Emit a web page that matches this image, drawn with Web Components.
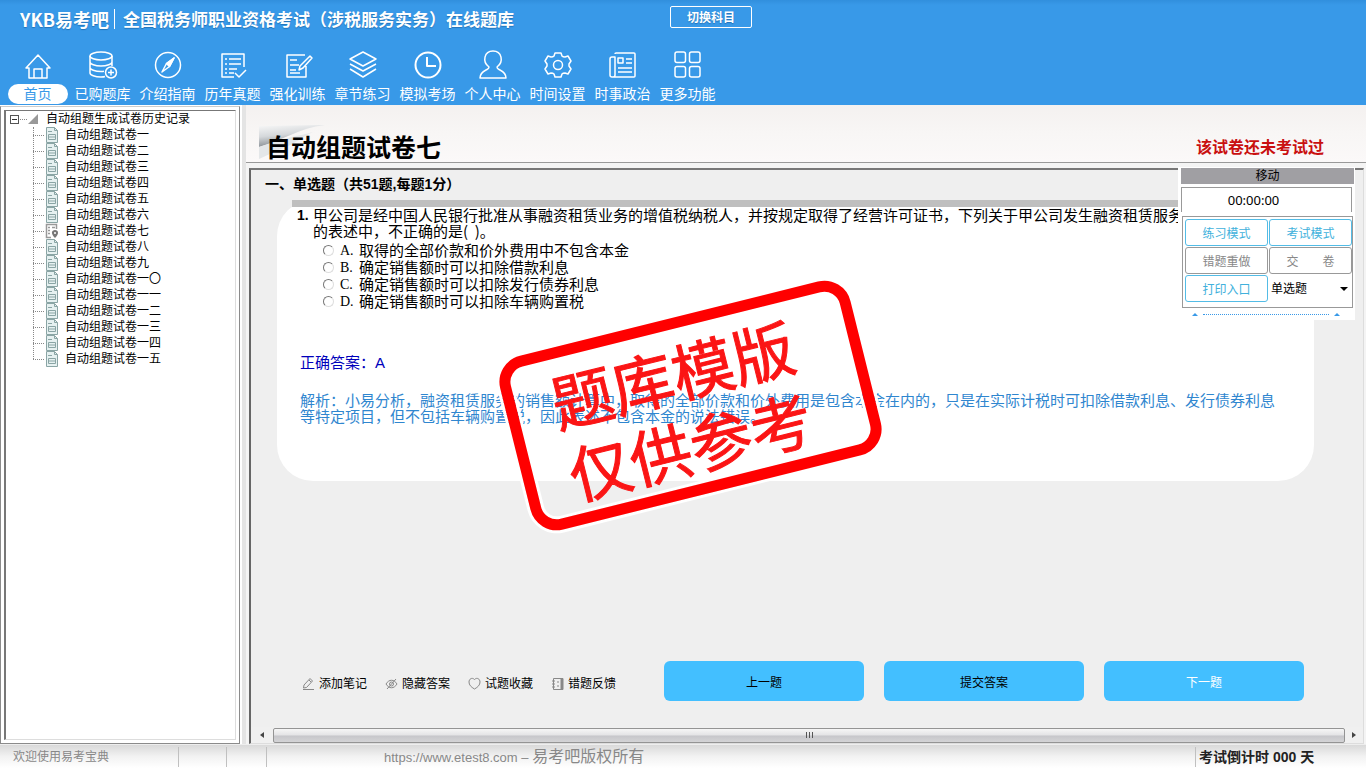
<!DOCTYPE html>
<html lang="zh-CN">
<head>
<meta charset="utf-8">
<meta name="viewport" content="width=device-width, initial-scale=1">
<title>易考吧在线题库</title>
<style>
  html, body { margin: 0; height: 100%; }
  body { font-family: "Liberation Sans", "Noto Sans CJK SC", sans-serif; font-size: 12px; color: #000; background: #f0f0f0; overflow-x: hidden; }
</style>
</head>
<body>
<exam-app></exam-app>

<script>
const define = (name, html, ready) => {
  const tpl = document.createElement('template');
  tpl.innerHTML = html;
  customElements.define(name, class extends HTMLElement {
    constructor() {
      super();
      this.attachShadow({ mode: 'open' }).append(tpl.content.cloneNode(true));
    }
    connectedCallback() { if (ready) ready(this, this.shadowRoot); }
  });
};

const NAV_ICONS = {
  home: '<path d="M2 17 14 4l12 13h-3v10H5V17zM10 27V18h8v9"/>',
  bank: '<ellipse cx="12" cy="5" rx="11" ry="4"/><path d="M1 5v17c0 2 5 4 11 4 2 0 3 0 4-.5M23 5v10M1 11c0 2 5 4 11 4s11-2 11-4M1 16.500c0 2 5 4 11 4 1 0 2 0 3-.2"/><circle cx="22" cy="21.500" r="5.500"/><path d="M22 18.500v6M19 21.500h6"/>',
  compass: '<circle cx="14" cy="14" r="12.500"/><path d="m20 7-4.500 8.500L8 21l4.500-8.500z"/><path d="m20 7-7.500 5.500 3 3z" fill="currentColor"/>',
  list: '<path d="M25 16V3H3v23h12M6 8h2M10 8h12M6 13h2M10 13h12M6 18h2M10 18h8M6 22h2M10 22h5M16 22l4 4 7-7"/>',
  edit: '<path d="M21 4H3v22h19V15M6 9h7M6 14h9M6 19h6M6 22h10M26 5l2 2-9 10-4 2 1-4z"/>',
  layers: '<path d="m14 1 13 7-13 7L1 8zM1 13l13 7 13-7M1 18l13 8 13-8"/>',
  clock: '<circle cx="14" cy="14" r="12.500" stroke-width="2"/><path d="M13 6v9h9" stroke-width="2"/>',
  user: '<path d="M10 16C3 11 5 0 14 0s11 11 4 16c0 2 1 2 3 3 4 2 6 4 6 8H1c0-4 2-6 6-8 2-1 3-1 3-3z"/>',
  gear: '<path d="M11 2h6l1 3c1 1 2 1 3 1l3-1 3 5-2 3v2l2 3-3 5-3-1c-1 0-2 0-3 1l-1 3h-6l-1-3c-1-1-2-1-3-1l-3 1-3-5 2-3v-2l-2-3 3-5 3 1c1 0 2 0 3-1z"/><circle cx="14" cy="14" r="4.500"/>',
  news: '<path d="M6 3q0-1 1-1h18q1 0 1 1v22q0 1-1 1H3q-2 0-2-2V8q0-2 2-2h3v18q0 2-2 2"/><path d="M9 7h5v5H9zM17 8h6M17 12h6M9 17h14M9 21h14"/>',
  more: '<rect x="1" y="1" width="10.500" height="10.500" rx="2"/><rect x="15.500" y="1" width="10.500" height="10.500" rx="2"/><rect x="1" y="15.500" width="10.500" height="10.500" rx="2"/><rect x="15.500" y="15.500" width="10.500" height="10.500" rx="2"/>'
};

define('nav-item', `
  <style>
    :host { display: block; width: 65px; flex: none; }
    a { display: flex; flex-direction: column; align-items: center; gap: 5px; color: #fff; text-decoration: none; }
    svg { width: 28px; height: 28px; overflow: visible; fill: none; stroke: currentColor; stroke-width: 1.5; stroke-linejoin: round; }
    span { width: 60px; height: 20px; border-radius: 10px; font: 14px/18px "Noto Sans CJK SC", sans-serif; text-align: center; white-space: nowrap; }
    :host([current]) span { background: #fff; color: #3899e8; }
  </style>
  <a href="#"><svg viewBox="0 0 28 28" aria-hidden="true"></svg><span><slot></slot></span></a>`,
  (el, root) => {
    root.querySelector('svg').innerHTML = NAV_ICONS[el.getAttribute('icon')];
    if (el.hasAttribute('current')) root.querySelector('a').setAttribute('aria-current', 'page');
  });

define('exam-header', `
  <style>
    :host { display: block; background: linear-gradient(#318fdd, #3899e8 5px); color: #fff; height: 105px; overflow: hidden; }
    .brand { display: flex; align-items: center; padding: 5px 20px 0; height: 28px; white-space: nowrap; text-shadow: 0 1px 1px #2273b8; }
    .logo { font: bold 18px/28px "Noto Sans CJK SC", sans-serif; }
    h1 { margin: 0 0 0 5px; padding-left: 8px; border-left: 1px solid #fff; font: bold 17px/20px "Noto Sans CJK SC", sans-serif; }
    button { margin: 0 0 4px 156px; width: 82px; height: 22px; padding: 0; background: none; border: 1px solid #fff; border-radius: 2px; color: #fff; font: bold 12px/18px "Noto Sans CJK SC", sans-serif; text-shadow: inherit; }
    nav { display: flex; padding: 18px 0 0 5px; }
  </style>
  <div class="brand">
    <span class="logo">YKB易考吧</span>
    <h1>全国税务师职业资格考试（涉税服务实务）在线题库</h1>
    <button type="button">切换科目</button>
  </div>
  <nav>
    <nav-item icon="home" current>首页</nav-item>
    <nav-item icon="bank">已购题库</nav-item>
    <nav-item icon="compass">介绍指南</nav-item>
    <nav-item icon="list">历年真题</nav-item>
    <nav-item icon="edit">强化训练</nav-item>
    <nav-item icon="layers">章节练习</nav-item>
    <nav-item icon="clock">模拟考场</nav-item>
    <nav-item icon="user">个人中心</nav-item>
    <nav-item icon="gear">时间设置</nav-item>
    <nav-item icon="news">时事政治</nav-item>
    <nav-item icon="more">更多功能</nav-item>
  </nav>`);

define('tree-item', `
  <style>
    :host { display: flex; align-items: center; height: 16px; line-height: 16px; white-space: nowrap; }
    i { width: 11px; height: 0; border-top: 1px dotted #888; flex: none; }
    svg { width: 14px; height: 16px; margin: 0 6px 0 1px; flex: none; }
    .now { display: none; }
    :host([current]) .now { display: block; }
    :host([current]) .doc { display: none; }
  </style>
  <i></i>
  <svg class="doc" viewBox="0 0 14 16" fill="#e6f1f1" stroke="#8aa5a5" aria-hidden="true"><path d="M1.500 .5h8l3 3v12h-11z"/><path d="M9.500 .5v3h3M3 4.500h4M3.500 7.500h7v5h-7zM3.500 10h7" fill="none"/></svg>
  <svg class="now" viewBox="0 0 14 16" fill="none" stroke="#999" aria-hidden="true"><path d="M6 14.500H1.500v-13h10V6M3 4.500h2M3 7.500h2M3 10.500h2M7 4.500h3" stroke-width="1.500"/><path d="M10 15c-5-5-3-8 0-8s5 3 0 8z" fill="#777" stroke="none"/><circle cx="10" cy="10" r="1" fill="#fff" stroke="none"/></svg>
  <slot></slot>`);

define('history-tree', `
  <style>
    :host { display: block; box-sizing: border-box; width: 240px; padding: 3px; margin-top: 1px; background: #fff; border: 1px solid #8b8b8b; border-top-color: #ccc; }
    .pane { box-sizing: border-box; height: 100%; border: 1px solid #ddd; border-top-color: #777; border-left: 2px solid #777; padding: 0 0 0 4px; }
    .root { display: flex; align-items: center; height: 16px; line-height: 16px; white-space: nowrap; }
    button { width: 9px; height: 9px; padding: 0; border: 1px solid #555; background: linear-gradient(#333, #333) center / 5px 1px no-repeat #fff; }
    i { width: 7px; border-top: 1px dotted #888; margin: 0 1px; }
    .root svg { width: 10px; height: 11px; margin-right: 8px; }
    ul { list-style: none; margin: 0 0 0 23px; padding: 0; position: relative; }
    ul::before { content: ""; position: absolute; left: 0; top: 0; bottom: 8px; border-left: 1px dotted #888; }
  </style>
  <div class="pane">
    <div class="root"><button type="button" aria-label="收起"></button><i></i><svg viewBox="0 0 10 11" aria-hidden="true"><path d="M10 0v10H0z" fill="#999"/></svg>自动组题生成试卷历史记录</div>
    <ul></ul>
  </div>`,
  (el, root) => {
    root.querySelector('ul').innerHTML = '一 二 三 四 五 六 七 八 九 一〇 一一 一二 一三 一四 一五'.split(' ')
      .map(n => `<li><tree-item${n === '七' ? ' current' : ''}>自动组题试卷${n}</tree-item></li>`).join('');
  });

define('paper-title', `
  <style>
    :host { display: flex; align-items: flex-end; justify-content: space-between; box-sizing: border-box; height: 58px; padding: 0 42px 1px 13px; background: linear-gradient(#f4f1f0, #f8f6f5 50%, #fbf9f9); border-bottom: 1px solid #999; white-space: nowrap; position: relative; }
    svg { position: absolute; left: 13px; top: 18px; width: 70px; height: 36px; }
    h2 { position: relative; margin: 0; padding-left: 7px; font: bold 25px/30px "Noto Sans CJK SC", sans-serif; }
    strong { font: bold 16px/30px "Noto Sans CJK SC", sans-serif; color: #c91010; }
  </style>
  <svg viewBox="0 0 70 36" aria-hidden="true">
    <defs><linearGradient id="s" x1="0" y1="0" x2="0.300" y2="1"><stop offset="0" stop-color="#f8f8f8"/><stop offset=".5" stop-color="#d5d8db"/><stop offset="1" stop-color="#81888e"/></linearGradient></defs>
    <path d="M0 3 66 2C40 5 22 18 0 24z" fill="url(#s)"/><path d="M0 24C28 14 40 13 54 9 42 14 38 20 26 24L0 36z" fill="#e4e7e9"/>
  </svg>
  <h2>自动组题试卷七</h2>
  <strong>该试卷还未考试过</strong>`);

define('answer-option', `
  <style>
    :host { display: block; height: 17px; }
    label { display: flex; align-items: center; line-height: 17px; }
    input { appearance: none; width: 11px; height: 11px; margin: 0 6px 0 0; border: 1px solid #aaa; border-top-color: #777; border-left-color: #777; border-radius: 50%; border-right-color: #ddd; border-bottom-color: #ddd; background: #fff; flex: none; }
    b { width: 19px; font: 14px/17px "Liberation Serif", serif; }
  </style>
  <label><input type="radio" name="answer"><b></b><span><slot></slot></span></label>`,
  (el, root) => { root.querySelector('b').textContent = el.getAttribute('key') + '.'; });

define('sample-stamp', `
  <style>
    :host { display: flex; align-items: center; justify-content: center; box-sizing: border-box; width: 361px; height: 179px; padding: 0 20px 0 0; border: 11px solid #f00; border-radius: 27px; box-shadow: 0 0 0 3px #fff, inset 0 0 0 3px #fff; transform: rotate(-14deg); color: #fb1515; text-align: center; pointer-events: none; font: 400 62px/74px "Noto Sans CJK SC", sans-serif; -webkit-text-stroke: 1px #fb1515; }
  </style>
  <div>题库模版<br>仅供参考</div>`);

define('question-card', `
  <style>
    :host { display: block; position: relative; box-sizing: border-box; min-height: 281px; margin: 0 49px 0 26px; padding: 7px 34px 46px 20px; background: #fff; border-radius: 36px; font: 15px/16px "Liberation Sans", "Noto Sans CJK SC", sans-serif; }
    .rule { position: absolute; left: 15px; right: 49px; top: 0; height: 7px; background: #bfbfbf; }
    .ask { position: relative; display: flex; margin: 0 86px 0 0; }
    .ask b { width: 16px; flex: none; font-size: 14px; }
    .ask p { margin: 0; font-family: "Noto Sans CJK SC", sans-serif; }
    fieldset { margin: 3px 0 45px 26px; padding: 0; border: 0; }
    .answer { margin: 0 0 22px 3px; color: #00b; }
    .note { margin: 0 0 0 3px; color: #2f86cf; }
    sample-stamp { position: absolute; left: 233px; top: 116px; }
  </style>
  <div class="rule"></div>
  <div class="ask"><b>1.</b><p>甲公司是经中国人民银行批准从事融资租赁业务的增值税纳税人，并按规定取得了经营许可证书，下列关于甲公司发生融资租赁服务的表述中，不正确的是(&nbsp; )。</p></div>
  <fieldset>
    <answer-option key="A">取得的全部价款和价外费用中不包含本金</answer-option>
    <answer-option key="B">确定销售额时可以扣除借款利息</answer-option>
    <answer-option key="C">确定销售额时可以扣除发行债券利息</answer-option>
    <answer-option key="D">确定销售额时可以扣除车辆购置税</answer-option>
  </fieldset>
  <p class="answer">正确答案：A</p>
  <p class="note">解析：小易分析，融资租赁服务的销售额计算中，取得的全部价款和价外费用是包含本金在内的，只是在实际计税时可扣除借款利息、发行债券利息等特定项目，但不包括车辆购置税，因此表述不包含本金的说法错误。</p>
  <sample-stamp></sample-stamp>`);

define('control-panel', `
  <style>
    :host { display: block; box-sizing: border-box; width: 177px; padding: 1px 1px 0 3px; background: #fff; }
    header { height: 16px; line-height: 16px; background: #a09fa3; text-align: center; }
    output { display: block; box-sizing: border-box; height: 25px; margin: 3px 2px 4px 0; padding-right: 26px; border: 1px solid #999; border-bottom: 0; text-align: center; font: 13px/25px "Noto Sans", sans-serif; }
    .grid { display: grid; grid-template-columns: 1fr 1fr; grid-auto-rows: 27px; gap: 1px; box-sizing: border-box; height: 92px; margin: 0 1px; padding: 2px 0 3px 2px; border: 1px solid #999; }
    button { padding: 0; border: 1px solid #999; border-radius: 3px; background: #fff; color: #888; font: inherit; white-space: pre; }
    .on { border-color: #53bce6; color: #41b1dc; }
    select { appearance: none; border: 0; padding: 0 0 0 2px; min-width: 0; font: inherit; color: #000; background: #fff; }
    .pick { display: grid; align-items: stretch; position: relative; }
    .pick::after { content: ""; position: absolute; right: 4px; top: 12px; border: 4px solid transparent; border-top: 4px solid #000; border-bottom: 0; pointer-events: none; }
    .grip { display: flex; align-items: center; justify-content: space-between; height: 12px; padding: 0 14px 0 11px; }
    .grip i { flex: 1; margin: 0 5px; border-top: 1px dotted #3899e8; }
    .grip::before, .grip::after { content: ""; border: 3px solid transparent; border-top: 0; border-bottom: 3px solid #3899e8; }
  </style>
  <header>移动</header>
  <output>00:00:00</output>
  <div class="grid">
    <button type="button" class="on">练习模式</button><button type="button" class="on">考试模式</button>
    <button type="button">错题重做</button><button type="button">交　　卷</button>
    <button type="button" class="on">打印入口</button>
    <div class="pick"><select aria-label="题型"><option>单选题</option></select></div>
  </div>
  <div class="grip"><i></i></div>`);

const TOOL_ICONS = {
  note: '<path d="m2 8 6-6.500 2.500 2.500L4.500 10.500l-3 .5zM7 3l2 2M1 12.500h11"/>',
  hide: '<path d="M1 7c3-5 8-5 11 0-3 5-8 5-11 0zM2 12 11 2"/><circle cx="6.500" cy="7" r="2"/>',
  like: '<path d="M6.500 12C3 10 1 8 1 5c0-3 3-5 5.500-2.500C9 0 12 2 12 5c0 3-2 5-5.500 7z"/>',
  flag: '<path d="M2.500 1.500h9v11h-9zM1 4h3M1 7h3M1 10h3M7 4v2M7 8v2"/><path d="M10 1.500h2v11h-2z" fill="#888"/>'
};

define('tool-link', `
  <style>
    :host { display: block; }
    button { display: flex; align-items: center; gap: 4px; padding: 0; border: 0; background: none; color: #000; font: inherit; line-height: 16px; white-space: nowrap; }
    svg { width: 13px; height: 14px; fill: none; stroke: #888; }
  </style>
  <button type="button"><svg viewBox="0 0 13 14" aria-hidden="true"></svg><slot></slot></button>`,
  (el, root) => { root.querySelector('svg').innerHTML = TOOL_ICONS[el.getAttribute('icon')]; });

define('action-button', `
  <style>
    :host { display: block; width: 200px; }
    button { display: block; width: 100%; height: 40px; padding: 0; border: 0; border-radius: 6px; background: #43bfff; color: #000; font: inherit; }
    :host([light]) button { color: #fff; }
  </style>
  <button type="button"><slot></slot></button>`);

define('scroll-strip', `
  <style>
    :host { display: flex; align-items: center; height: 16px; background: #f0f0f0; }
    i { width: 22px; display: flex; justify-content: center; }
    i::before { content: ""; border: 3px solid transparent; border-right: 4px solid #444; border-left: 0; }
    i.end { width: 18px; }
    i.end::before { border: 3px solid transparent; border-left: 4px solid #444; border-right: 0; }
    .thumb { flex: 1; box-sizing: border-box; height: 15px; border: 1px solid #949494; border-radius: 2px; background: linear-gradient(#f6f6f6, #e3e3e5 48%, #c6c6ca 52%, #d4d4d6); display: flex; align-items: center; justify-content: center; gap: 2px; }
    .thumb b { width: 1px; height: 6px; background: #555; }
  </style>
  <i></i><div class="thumb"><b></b><b></b><b></b></div><i class="end"></i>`);

define('exam-workspace', `
  <style>
    :host { display: flex; flex-direction: column; position: relative; min-width: 0; }
    section { flex: 1; display: flex; flex-direction: column; margin: 5px 2px 0 3px; border: 1px solid #ddd; border-top: 2px solid #777; border-left: 2px solid #666; background: #efefef; }
    h3 { margin: 4px 0 6px 14px; font: bold 14px/20px "Liberation Sans", "Noto Sans CJK SC", sans-serif; }
    .bar { display: flex; align-items: center; justify-content: space-between; margin: auto 59px 26px 51px; }
    .tools { display: flex; gap: 18px; padding-top: 6px; }
    .moves { display: flex; gap: 20px; }
    control-panel { position: absolute; right: 11px; top: 62px; }
  </style>
  <paper-title></paper-title>
  <section>
    <h3>一、单选题（共51题,每题1分）</h3>
    <question-card></question-card>
    <div class="bar">
      <div class="tools">
        <tool-link icon="note">添加笔记</tool-link><tool-link icon="hide">隐藏答案</tool-link><tool-link icon="like">试题收藏</tool-link><tool-link icon="flag">错题反馈</tool-link>
      </div>
      <div class="moves"><action-button>上一题</action-button><action-button>提交答案</action-button><action-button light>下一题</action-button></div>
    </div>
    <scroll-strip></scroll-strip>
  </section>
  <control-panel></control-panel>`);

define('status-bar', `
  <style>
    :host { display: grid; grid-template-columns: 179px 48px 40px 1fr 170px; align-items: center; height: 23px; background: linear-gradient(#d9d9d9, #f2f2f2 50%, #fff); border-top: 1px solid #eee; color: #888; white-space: nowrap; }
    span { box-sizing: border-box; height: 20px; line-height: 20px; border-right: 1px solid #c0c0c0; }
    .hi { padding-left: 13px; }
    .copy { padding-left: 117px; font-size: 13px; }
    a { color: inherit; text-decoration: none; }
    b { font-weight: normal; font-size: 16px; }
    strong { padding-left: 3px; font: bold 14px/20px "Liberation Sans", "Noto Sans CJK SC", sans-serif; color: #222; }
  </style>
  <span class="hi">欢迎使用易考宝典</span><span></span><span></span>
  <span class="copy"><a href="#">https://www.etest8.com</a> – <b>易考吧版权所有</b></span>
  <strong>考试倒计时 000 天</strong>`);

define('exam-app', `
  <style>
    :host { display: grid; grid-template-rows: auto 1fr auto; min-height: 100vh; }
    main { display: grid; grid-template-columns: auto minmax(0, 1fr); column-gap: 6px; background: linear-gradient(90deg, #fff 242px, #e4e4e4 242px, #e4e4e4 246px, #f4f4f4 246px); }
  </style>
  <exam-header></exam-header>
  <main><history-tree></history-tree><exam-workspace></exam-workspace></main>
  <status-bar></status-bar>`);
</script>
</body>
</html>
